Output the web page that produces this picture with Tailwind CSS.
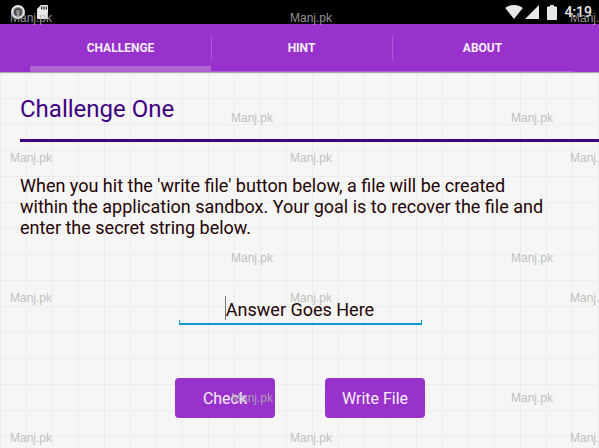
<!DOCTYPE html>
<html lang="en">

<head>
    <meta charset="UTF-8">
    <meta name="viewport" content="width=device-width, initial-scale=1">

    <title>Challenge One</title>

    <!-- TAILWIND -->
    <script src="https://cdn.jsdelivr.net/npm/@tailwindcss/browser@4"></script>
</head>

<body class="relative min-h-screen overflow-hidden bg-black font-['Roboto',sans-serif]">

    <div class="flex min-h-screen flex-col">

        <!-- STATUS BAR -->
        <div class="flex h-6 items-center justify-between bg-black pr-[7px] pl-[11px] text-[#e8e8e8]">

            <div class="flex items-center gap-3">
                <svg class="size-[14px]" viewBox="0 0 14 14">
                    <circle cx="7" cy="7" r="7" fill="#e8e8e8" />
                    <circle cx="7" cy="7" r="4.8" fill="#777" />
                    <circle cx="7" cy="7" r="3.6" fill="#444" />
                    <circle cx="7" cy="7" r="2.2" fill="#888" />
                </svg>
                <svg class="h-[14px] w-[11px]" viewBox="0 0 11 14">
                    <path d="M4 0h6a1 1 0 0 1 1 1v12a1 1 0 0 1-1 1H1a1 1 0 0 1-1-1V4z" fill="#e8e8e8" />
                    <path d="M4.7 1.5v3M7 1.5v3M9.3 1.5v3" stroke="#222" stroke-width="1.2" />
                </svg>
            </div>

            <div class="flex items-center">
                <svg class="h-[14px] w-[18px]" viewBox="0 0 18 14" fill="currentColor">
                    <path d="M9 14L.2 3.1C2.600 1.100 5.600 0 9 0s6.400 1.100 8.800 3.100z" />
                </svg>
                <svg class="ml-0.5 size-[14px]" viewBox="0 0 14 14" fill="currentColor">
                    <path d="M14 0v14H0z" />
                </svg>
                <svg class="ml-2 h-[15px] w-[10px]" viewBox="0 0 10 15" fill="currentColor">
                    <path d="M3 0h4v1.500h2.200a.8.8 0 0 1 .8.8v11.900a.8.8 0 0 1-.8.8H.8a.8.8 0 0 1-.8-.8V2.300a.8.8 0 0 1 .8-.8H3z" />
                </svg>
                <span class="ml-[7px] text-sm font-medium">4:19</span>
            </div>
        </div>

        <!-- TABS -->
        <nav class="z-10 h-12 bg-[#9932cc] pr-[26px] pl-[30px] shadow-[0_1px_1px_#aaaaaa]">

            <div class="flex h-full border-b border-[#ad5dd6] text-xs font-bold text-[#f5edf9]">
                <a href="#challenge" class="relative flex flex-1 items-center justify-center">
                    CHALLENGE
                    <span class="absolute inset-x-0 bottom-0 h-[5px] bg-[#ad66d1]"></span>
                </a>
                <a href="#hint" class="relative flex flex-1 items-center justify-center">
                    <span class="absolute top-3 left-0 h-6 w-px bg-[#ad5bd6]"></span>
                    HINT
                </a>
                <a href="#about" class="relative flex flex-1 items-center justify-center">
                    <span class="absolute top-3 left-0 h-6 w-px bg-[#ad5bd6]"></span>
                    ABOUT
                </a>
            </div>
        </nav>

        <!-- CONTENT -->
        <main class="flex-1 bg-[#f8f8f8] bg-[linear-gradient(#ececec_1px,transparent_1px),linear-gradient(90deg,#ececec_1px,transparent_1px),linear-gradient(#f5f5f5_1px,transparent_1px),linear-gradient(90deg,#f5f5f5_1px,transparent_1px)] bg-[size:26px_26px,26px_26px,2px_2px,2px_2px] pl-5 text-lg text-[#240404]">

            <h1 class="border-b-3 border-[#3f0082] pt-[21px] pb-[14px] text-2xl/8 text-[#3f0082]">Challenge One</h1>

            <p class="mr-5 max-w-[535px] pt-[33px] leading-[21px]">
                When you hit the 'write file' button below, a file will be created within the application sandbox.
                Your goal is to recover the file and enter the secret string below.
            </p>

            <form class="flex flex-col items-center pt-[54px] pr-[19px]">

                <div class="relative w-[243px]">
                    <input type="text" aria-label="Answer" placeholder="Answer Goes Here"
                        class="block h-[33px] w-full border-b-2 border-[#0a9bd0] pt-1 text-center text-lg outline-none placeholder:text-[#240404]">
                    <span class="absolute top-1 left-[46px] h-6 w-px bg-[#777777]"></span>
                    <span class="absolute bottom-0 left-0 h-[5px] w-px bg-[#0a9bd0]"></span>
                    <span class="absolute right-0 bottom-0 h-[5px] w-px bg-[#0a9bd0]"></span>
                </div>

                <div class="flex gap-[50px] pt-[53px] pb-[30px]">
                    <button type="button" class="h-10 w-[100px] rounded bg-[#9932cc] pt-0.5 text-base text-[#f5edf9]">Check</button>
                    <button type="button" class="h-10 w-[100px] rounded bg-[#9932cc] pt-0.5 text-base text-[#f5edf9]">Write File</button>
                </div>
            </form>
        </main>
    </div>

    <!-- WATERMARK -->
    <div class="pointer-events-none absolute inset-0 z-20 overflow-hidden pt-2 font-['Liberation_Sans',sans-serif] text-xs/5 text-[#b4b4b4]/85" aria-hidden="true">

        <div class="mb-5 flex flex-col gap-20">
            <div class="flex pl-2.5 *:w-[280px] *:shrink-0"><span>Manj.pk</span><span>Manj.pk</span><span>Manj.pk</span></div>
            <div class="flex pl-[231px] *:w-[280px] *:shrink-0"><span>Manj.pk</span><span>Manj.pk</span></div>
        </div>
        <div class="mb-5 flex flex-col gap-20">
            <div class="flex pl-2.5 *:w-[280px] *:shrink-0"><span>Manj.pk</span><span>Manj.pk</span><span>Manj.pk</span></div>
            <div class="flex pl-[231px] *:w-[280px] *:shrink-0"><span>Manj.pk</span><span>Manj.pk</span></div>
        </div>
        <div class="mb-5 flex flex-col gap-20">
            <div class="flex pl-2.5 *:w-[280px] *:shrink-0"><span>Manj.pk</span><span>Manj.pk</span><span>Manj.pk</span></div>
            <div class="flex pl-[231px] *:w-[280px] *:shrink-0"><span>Manj.pk</span><span>Manj.pk</span></div>
        </div>
        <div class="flex pl-2.5 *:w-[280px] *:shrink-0"><span>Manj.pk</span><span>Manj.pk</span><span>Manj.pk</span></div>
    </div>
</body>

</html>
